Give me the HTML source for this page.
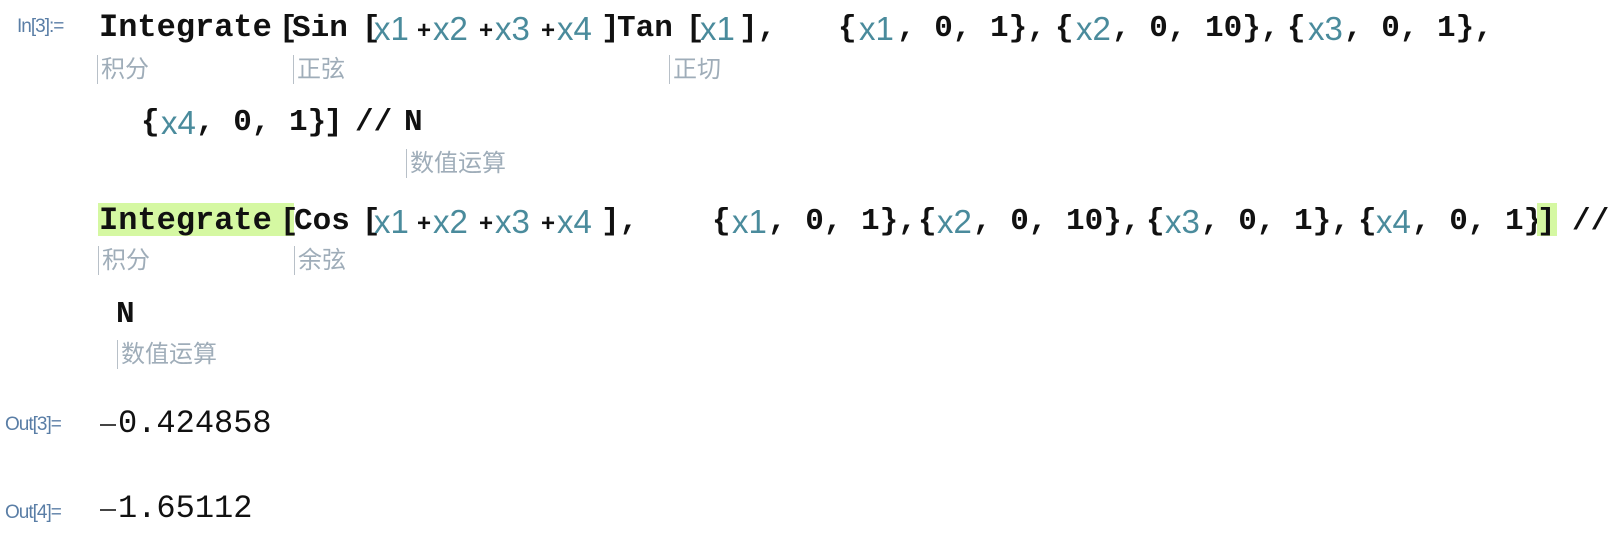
<!DOCTYPE html>
<html><head><meta charset="utf-8"><style>
body{margin:0;width:1617px;height:534px;background:#fff;position:relative;overflow:hidden}
span{position:absolute;white-space:pre;line-height:1}
.m{font-family:"Liberation Mono",monospace;font-weight:bold;font-size:31px;color:#111}
.p{font-family:"Liberation Sans",sans-serif;font-weight:bold;font-size:24px;color:#111}
.v{font-family:"Liberation Sans",sans-serif;font-size:33px;color:#4a8b9c}
.a{font-family:"Liberation Sans","Noto Sans CJK SC",sans-serif;font-size:24px;color:#9fadb9;border-left:1px solid #b8c0c8;padding-left:3px;height:29px;line-height:29px}
.l{font-family:"Liberation Sans",sans-serif;font-size:19px;color:#5a7ea6;letter-spacing:-1px}
.o{font-family:"Liberation Mono",monospace;font-size:32px;color:#111}
.hl{background:#d5f8a2}
.mi{position:absolute;height:2px;width:16px;background:#444}
</style></head><body>
<span class="l" style="left:17px;top:17px">In[3]:=</span>
<span class="m" style="left:99px;top:12px;font-size:32px">Integrate</span>
<span class="m" style="left:279px;top:13px">[</span>
<span class="m" style="left:292px;top:13px">Sin</span>
<span class="m" style="left:362px;top:13px">[</span>
<span class="v" style="left:374px;top:12px">x1</span><span class="p" style="left:417px;top:19px">+</span>
<span class="v" style="left:433px;top:12px">x2</span><span class="p" style="left:479px;top:19px">+</span>
<span class="v" style="left:495px;top:12px">x3</span><span class="p" style="left:541px;top:19px">+</span>
<span class="v" style="left:557px;top:12px">x4</span><span class="m" style="left:601px;top:13px">]</span>
<span class="m" style="left:617px;top:13px">Tan</span>
<span class="m" style="left:686px;top:13px">[</span>
<span class="v" style="left:700px;top:12px">x1</span><span class="m" style="left:739px;top:13px">],</span>
<span class="m" style="left:838px;top:13px">{</span>
<span class="v" style="left:859px;top:12px">x1</span><span class="m" style="left:897px;top:13px">, 0, 1},</span>
<span class="m" style="left:1055px;top:13px">{</span>
<span class="v" style="left:1076px;top:12px">x2</span><span class="m" style="left:1112px;top:13px">, 0, 10},</span>
<span class="m" style="left:1287px;top:13px">{</span>
<span class="v" style="left:1308px;top:12px">x3</span><span class="m" style="left:1344px;top:13px">, 0, 1},</span>
<span class="a" style="left:97px;top:55px">积分</span>
<span class="a" style="left:293px;top:55px">正弦</span>
<span class="a" style="left:669px;top:55px">正切</span>

<span class="m" style="left:141px;top:107px">{</span>
<span class="v" style="left:161px;top:106px">x4</span><span class="m" style="left:196px;top:107px">, 0, 1}</span>
<span class="m" style="left:324px;top:107px">]</span>
<span class="m" style="left:355px;top:107px">//</span>
<span class="m" style="left:404px;top:107px">N</span>
<span class="a" style="left:406px;top:149px">数值运算</span>

<span class="hl" style="left:98px;top:203px;width:196px;height:33px"></span>
<span class="m" style="left:99px;top:205px;font-size:32px">Integrate</span>
<span class="m" style="left:280px;top:206px">[</span>
<span class="m" style="left:294px;top:206px">Cos</span>
<span class="m" style="left:362px;top:206px">[</span>
<span class="v" style="left:374px;top:205px">x1</span><span class="p" style="left:417px;top:212px">+</span>
<span class="v" style="left:433px;top:205px">x2</span><span class="p" style="left:479px;top:212px">+</span>
<span class="v" style="left:495px;top:205px">x3</span><span class="p" style="left:541px;top:212px">+</span>
<span class="v" style="left:557px;top:205px">x4</span><span class="m" style="left:601px;top:206px">],</span>
<span class="m" style="left:712px;top:206px">{</span>
<span class="v" style="left:732px;top:205px">x1</span><span class="m" style="left:768px;top:206px">, 0, 1},</span>
<span class="m" style="left:918px;top:206px">{</span>
<span class="v" style="left:937px;top:205px">x2</span><span class="m" style="left:973px;top:206px">, 0, 10},</span>
<span class="m" style="left:1146px;top:206px">{</span>
<span class="v" style="left:1165px;top:205px">x3</span><span class="m" style="left:1201px;top:206px">, 0, 1},</span>
<span class="m" style="left:1358px;top:206px">{</span>
<span class="v" style="left:1376px;top:205px">x4</span><span class="m" style="left:1412px;top:206px">, 0, 1}</span>
<span class="hl" style="left:1537px;top:203px;width:20px;height:33px"></span>
<span class="m" style="left:1537px;top:206px">]</span>
<span class="m" style="left:1572px;top:206px">//</span>
<span class="a" style="left:98px;top:246px">积分</span>
<span class="a" style="left:294px;top:246px">余弦</span>

<span class="m" style="left:116px;top:299px">N</span>
<span class="a" style="left:117px;top:340px">数值运算</span>

<span class="l" style="left:5px;top:415px">Out[3]=</span>
<div class="mi" style="left:100px;top:424px"></div>
<span class="o" style="left:118px;top:408px">0.424858</span>
<span class="l" style="left:5px;top:503px">Out[4]=</span>
<div class="mi" style="left:100px;top:509px"></div>
<span class="o" style="left:118px;top:493px">1.65112</span>
</body></html>
